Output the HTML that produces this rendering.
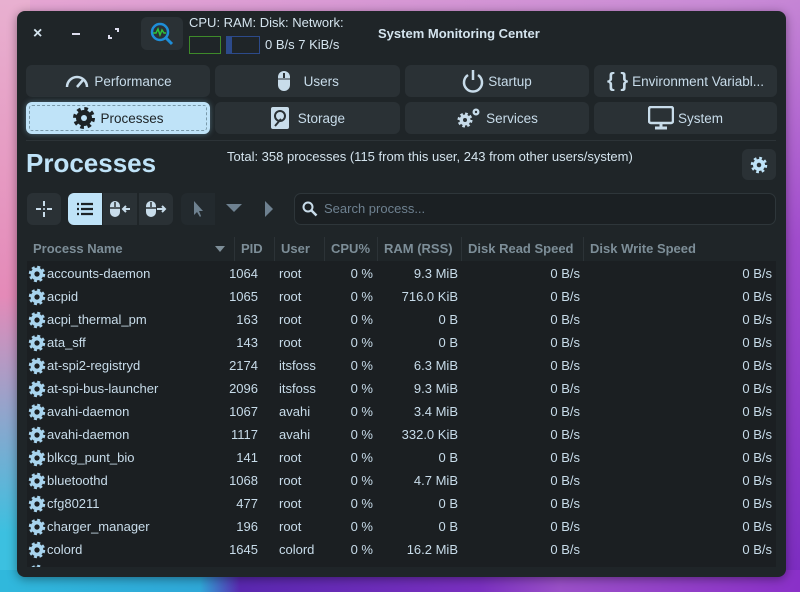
<!DOCTYPE html>
<html><head><meta charset="utf-8"><style>
*{box-sizing:border-box;margin:0;padding:0}
body{width:800px;height:592px;overflow:hidden;position:relative;font-family:"Liberation Sans",sans-serif;
background:linear-gradient(160deg,#e6a6d2 0%,#c98bd6 30%,#a04ccc 60%,#7a2bc0 100%);}
.bgl{position:absolute;left:0;top:0;width:30px;height:592px;background:linear-gradient(180deg,#e8b0d0 0%,#e48ab8 50%,#3cc0e0 90%)}
.bgb{position:absolute;left:0;top:570px;width:800px;height:22px;background:linear-gradient(90deg,#30b8dc 0%,#2fa8d8 25%,#5a28b0 30%,#7a30c0 60%,#9a50c8 70%,#8a30c8 100%)}
.win{position:absolute;left:17px;top:11px;width:769px;height:566px;background:#1f2528;border-radius:8px;box-shadow:0 2px 10px rgba(0,0,0,.4)}
.t{position:absolute;color:#d4e4ee;font-size:13px;white-space:nowrap}
.btn{position:absolute;height:32px;background:#2a3135;border-radius:6px;color:#c8dcea;font-size:13.5px;display:flex;align-items:center;justify-content:center;gap:4px}
.sel{background:#bfe3f8;color:#1d2326;outline:1px dashed #7a9aaa;outline-offset:-4px;box-shadow:0 0 6px rgba(150,210,240,.4)}
.tb{position:absolute;top:182px;height:32px;width:34px;background:#2a3135;display:flex;align-items:center;justify-content:center}
.tbl{position:absolute;left:27px;top:237px;width:749px;height:330px;background:#1b1f22;overflow:hidden}
.hd{position:absolute;top:0;left:0;width:749px;height:24px;background:#1f2528;color:#7d8e98;font-weight:bold;font-size:13px}
.hd span{position:absolute;top:4px}
.sep{position:absolute;top:0;width:1px;height:24px;background:#2c3337}
.r{position:absolute;left:0;width:749px;height:23px;color:#c8dcea;font-size:13px}
.r span{position:absolute;top:4px;white-space:nowrap}
.rt{text-align:right}
</style></head><body>
<div class="bgl"></div><div class="bgb"></div>
<div class="win">
<div class="t" style="left:16px;top:14px;font-size:16px;font-weight:bold">×</div>
<div style="position:absolute;left:55px;top:22px;width:8px;height:2px;background:#dde"></div>
<svg style="position:absolute;left:91px;top:17px" width="11" height="11"><path d="M1 7v3h3M10 4V1H7" stroke="#dde" stroke-width="2" fill="none"/></svg>
<div style="position:absolute;left:124px;top:6px;width:42px;height:33px;background:#2a3135;border-radius:6px"></div>
<svg style="position:absolute;left:132px;top:10px" width="26" height="26"><circle cx="11" cy="11" r="8" stroke="#1e8ed8" stroke-width="2.5" fill="none"/><path d="M17 17l6 6" stroke="#1e8ed8" stroke-width="3"/><path d="M4 12l3 0 2-4 2 6 2-5 2 3 2 0" stroke="#2ec23c" stroke-width="1.5" fill="none"/></svg>
<div class="t" style="left:172px;top:4px">CPU: RAM: Disk: Network:</div>
<div style="position:absolute;left:172px;top:25px;width:32px;height:18px;border:1px solid #3e8a2a"></div>
<div style="position:absolute;left:209px;top:25px;width:34px;height:18px;border:1px solid #2c4a8a"><div style="width:5px;height:16px;background:#2c4a8a"></div></div>
<div class="t" style="left:248px;top:26px">0 B/s 7 KiB/s</div>
<div class="t" style="left:361px;top:15px;font-weight:bold">System Monitoring Center</div>

<div class="btn" style="left:9px;top:54px;width:184px"><svg width="26" height="16"><path d="M3 14A10 10 0 0 1 23 14" stroke="#c8dcea" stroke-width="2.5" fill="none"/><path d="M13 14l6-7" stroke="#c8dcea" stroke-width="2.5"/></svg>Performance</div>
<div class="btn" style="left:198px;top:54px;width:185px"><svg width="16" height="22"><rect x="2" y="1" width="12" height="20" rx="6" fill="#c8dcea"/><path d="M8 3v5" stroke="#2a3135" stroke-width="2"/><path d="M2 9h12" stroke="#2a3135" stroke-width="1"/></svg>&nbsp;&nbsp;Users</div>
<div class="btn" style="left:388px;top:54px;width:184px"><svg width="22" height="24"><path d="M6 6A9 9 0 1 0 16 6" stroke="#c8dcea" stroke-width="2.5" fill="none"/><path d="M11 1v10" stroke="#c8dcea" stroke-width="2.5"/></svg>Startup</div>
<div class="btn" style="left:577px;top:54px;width:183px"><span style="font-weight:bold;font-size:20px">{ }</span>Environment Variabl...</div>

<div class="btn sel" style="left:9px;top:91px;width:184px"><svg width="24" height="24" viewBox="0 0 24 24"><circle cx="12" cy="12" r="9" stroke="#1d2326" stroke-width="4" stroke-dasharray="3.5 3.57" fill="none"/><circle cx="12" cy="12" r="8" fill="#1d2326"/><circle cx="12" cy="12" r="3" fill="#bfe3f8"/></svg>Processes</div>
<div class="btn" style="left:198px;top:91px;width:185px"><svg width="20" height="24"><rect x="1" y="1" width="18" height="22" rx="2" fill="#c8dcea"/><circle cx="10" cy="10" r="5" stroke="#2a3135" stroke-width="2" fill="none"/><path d="M5 20l6-7" stroke="#2a3135" stroke-width="2"/></svg>&nbsp;Storage</div>
<div class="btn" style="left:388px;top:91px;width:184px"><svg width="26" height="22" viewBox="0 0 26 22"><circle cx="9" cy="13" r="6" stroke="#c8dcea" stroke-width="3" stroke-dasharray="2.5 2.2" fill="none"/><circle cx="9" cy="13" r="5.5" fill="#c8dcea"/><circle cx="9" cy="13" r="2" fill="#2a3135"/><circle cx="20" cy="5" r="3.5" fill="#c8dcea"/><circle cx="20" cy="5" r="1.2" fill="#2a3135"/></svg>Services</div>
<div class="btn" style="left:577px;top:91px;width:183px"><svg width="26" height="24"><rect x="1" y="1" width="24" height="16" rx="2" stroke="#c8dcea" stroke-width="2.5" fill="none"/><path d="M13 17v4M7 22h12" stroke="#c8dcea" stroke-width="3"/></svg>System</div>

<div style="position:absolute;left:9px;top:129px;width:750px;height:1px;background:#2c3337"></div>
<div class="t" style="left:9px;top:137px;font-size:26px;font-weight:bold;color:#bfe3f8">Processes</div>
<div class="t" style="left:210px;top:138px">Total: 358 processes (115 from this user, 243 from other users/system)</div>
<div style="position:absolute;left:725px;top:138px;width:34px;height:31px;background:#2a3135;border-radius:6px;display:flex;align-items:center;justify-content:center"><svg width="18" height="18" viewBox="0 0 24 24"><circle cx="12" cy="12" r="9" stroke="#bfe3f8" stroke-width="4" stroke-dasharray="3.5 3.57" fill="none"/><circle cx="12" cy="12" r="8" fill="#bfe3f8"/><circle cx="12" cy="12" r="3" fill="#2a3135"/></svg></div>

<div class="tb" style="left:10px;border-radius:6px"><svg width="18" height="18"><path d="M9 1v5M9 12v5M1 9h5M12 9h5" stroke="#c8dcea" stroke-width="2"/><circle cx="9" cy="9" r="1" fill="#c8dcea"/></svg></div>
<div class="tb" style="left:51px;background:#bfe3f8;border-radius:6px 0 0 6px"><svg width="18" height="14"><g stroke="#1d2326" stroke-width="2.2"><path d="M1 2h2M1 7h2M1 12h2M5 2h12M5 7h12M5 12h12"/></g></svg></div>
<div class="tb" style="left:86px"><svg width="22" height="18"><rect x="1" y="1" width="10" height="16" rx="5" fill="#c8dcea"/><path d="M6 2v5M1 8h10" stroke="#2a3135" stroke-width="1.5"/><path d="M21 9h-7M17 6l-3 3 3 3" stroke="#c8dcea" stroke-width="2" fill="none"/></svg></div>
<div class="tb" style="left:122px;border-radius:0 6px 6px 0"><svg width="22" height="18"><rect x="1" y="1" width="10" height="16" rx="5" fill="#c8dcea"/><path d="M6 2v5M1 8h10" stroke="#2a3135" stroke-width="1.5"/><path d="M12 9h8M17 6l3 3-3 3" stroke="#c8dcea" stroke-width="2" fill="none"/></svg></div>
<div class="tb" style="left:164px;background:#232a2e;border-radius:6px 0 0 6px"><svg width="12" height="18"><path d="M2 1v14l3-3 3 5 1-1-2-5h4z" fill="#6e8190"/></svg></div>
<svg style="position:absolute;left:209px;top:193px" width="16" height="10"><path d="M0 0h16l-8 8z" fill="#6e8190"/></svg>
<svg style="position:absolute;left:248px;top:190px" width="10" height="16"><path d="M0 0v16l8-8z" fill="#6e8190"/></svg>
<div style="position:absolute;left:277px;top:182px;width:482px;height:32px;background:#1b2023;border:1px solid #2e363a;border-radius:7px"></div>
<svg style="position:absolute;left:285px;top:190px" width="16" height="16"><circle cx="6" cy="6" r="4.5" stroke="#c8dcea" stroke-width="2" fill="none"/><path d="M9.5 9.5l5 5" stroke="#c8dcea" stroke-width="2.5"/></svg>
<div class="t" style="left:307px;top:190px;line-height:16px;color:#6e8190">Search process...</div>
</div>

<div class="tbl">
<div class="hd"><span style="left:6px">Process Name</span>
<svg style="position:absolute;left:188px;top:9px" width="10" height="6"><path d="M0 0h10l-5 6z" fill="#7d8e98"/></svg>
<div class="sep" style="left:207px"></div><span style="left:214px">PID</span>
<div class="sep" style="left:247px"></div><span style="left:254px">User</span>
<div class="sep" style="left:297px"></div><span style="left:304px">CPU%</span>
<div class="sep" style="left:350px"></div><span style="left:357px">RAM (RSS)</span>
<div class="sep" style="left:434px"></div><span style="left:441px">Disk Read Speed</span>
<div class="sep" style="left:556px"></div><span style="left:563px">Disk Write Speed</span>
</div>
<div id="rows"></div>
</div>
<script>
var d=[["accounts-daemon",1064,"root","9.3 MiB"],["acpid",1065,"root","716.0 KiB"],["acpi_thermal_pm",163,"root","0 B"],["ata_sff",143,"root","0 B"],["at-spi2-registryd",2174,"itsfoss","6.3 MiB"],["at-spi-bus-launcher",2096,"itsfoss","9.3 MiB"],["avahi-daemon",1067,"avahi","3.4 MiB"],["avahi-daemon",1117,"avahi","332.0 KiB"],["blkcg_punt_bio",141,"root","0 B"],["bluetoothd",1068,"root","4.7 MiB"],["cfg80211",477,"root","0 B"],["charger_manager",196,"root","0 B"],["colord",1645,"colord","16.2 MiB"],["",0,"",""]];
var g='<svg width="18" height="18" viewBox="0 0 24 24" style="position:absolute;left:1px;top:3px"><circle cx="12" cy="12" r="9.5" stroke="#a8d4ee" stroke-width="3" stroke-dasharray="4 3.46" fill="none"/><circle cx="12" cy="12" r="8.5" fill="#a8d4ee"/><circle cx="12" cy="12" r="3.5" fill="#1b1f22"/></svg>';
var h='';d.forEach(function(r,i){var t=25+i*23;
if(!r[0]){h+='<div class="r" style="top:'+t+'px">'+g+'</div>';return;}
h+='<div class="r" style="top:'+t+'px">'+g+'<span style="left:20px">'+r[0]+'</span><span class="rt" style="right:518px">'+r[1]+'</span><span style="left:252px">'+r[2]+'</span><span class="rt" style="right:403px">0 %</span><span class="rt" style="right:318px">'+r[3]+'</span><span class="rt" style="right:196px">0 B/s</span><span class="rt" style="right:4px">0 B/s</span></div>';});
document.getElementById('rows').innerHTML=h;
</script>
</body></html>
